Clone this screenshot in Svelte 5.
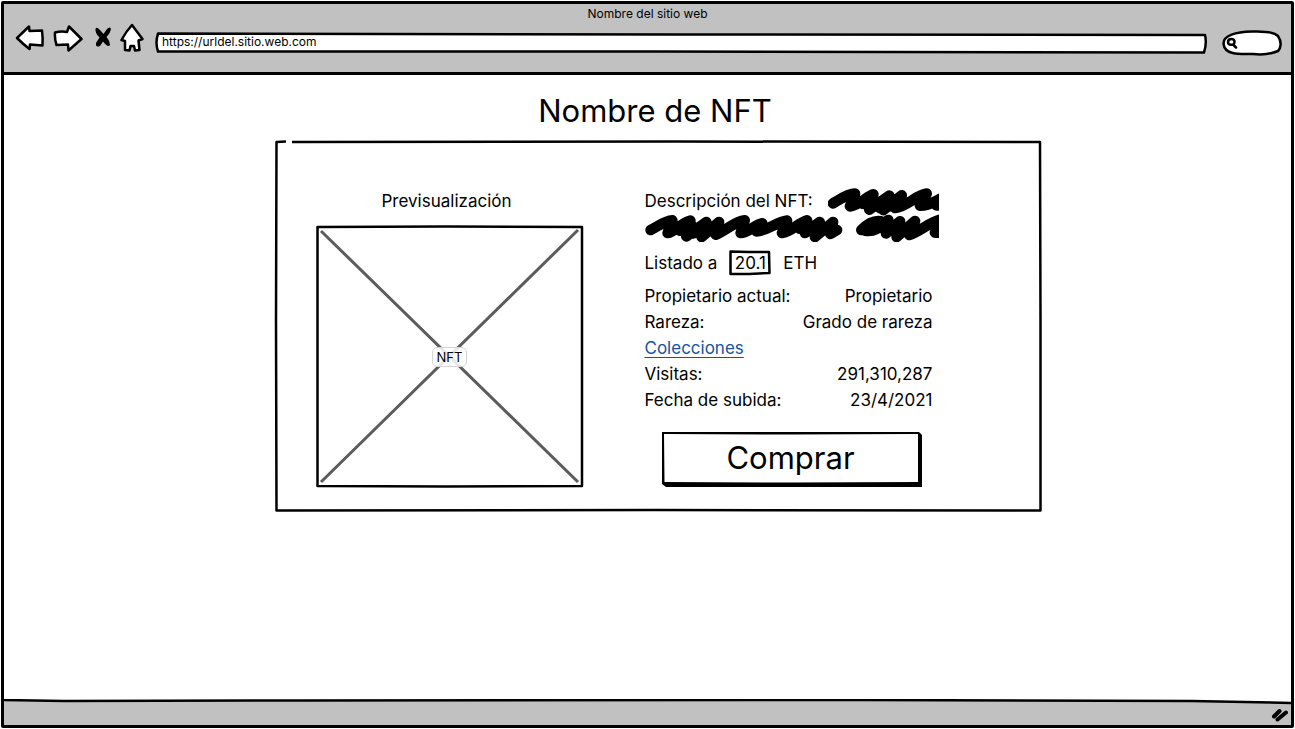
<script>
  const title = 'Nombre de NFT';
  let url = $state('https://urldel.sitio.web.com');
  let query = $state('');
  let price = $state('20.1');
</script>

<div class="browser">
  <header>
    <div class="site-name">Nombre del sitio web</div>
    <div class="toolbar">
      <button class="back" aria-label="Atrás">
        <svg width="30" height="28" viewBox="0 0 30 28"><path class="ink" d="M2 14 L14 2.5 L14.5 7 L27 6.5 Q28 14 27.5 21.5 L15 20.5 L14.5 25 Q8 20 2 14Z" /></svg>
      </button>
      <button class="forward" aria-label="Adelante">
        <svg width="30" height="28" viewBox="0 0 30 28"><path class="ink" d="M2 8.5 Q8 7 14 8 L16 2.5 L28.5 15 L15.5 26.5 L15 20.5 L3.5 21 Q1.5 15 2 8.5Z" /></svg>
      </button>
      <button class="stop" aria-label="Detener">
        <svg width="18" height="22" viewBox="0 0 18 22"><path d="M1.5 3 Q2 0 6 4 L9.5 8 L13 3 Q16 0 17 3 Q16.5 7 12.5 11 Q16 15 16 19 Q14 22 9 15.5 L6 20 Q1.5 22 2 17 L5.5 11.5 Q1 7.5 1.5 3Z" /></svg>
      </button>
      <button class="home" aria-label="Inicio">
        <svg width="24" height="30" viewBox="0 0 24 30"><path class="ink" d="M12 2 L22.5 16 L18.5 17.5 L19.5 27 L15 27.5 L14 23 L10.5 23 L9.5 27.5 L5 27 L5 18 L1.5 17 Q6 8.5 12 2Z" /></svg>
      </button>
      <div class="address sketch">
        <svg class="outline" viewBox="0 0 1051 22" preserveAspectRatio="none" aria-hidden="true"><path class="ink" d="M3 1.5 L520 2.5 L1049 3 Q1051 11 1048 20.5 L500 19.5 L3 19.5 Q0 11 3 1.5Z" /></svg>
        <input aria-label="Dirección" bind:value={url} />
      </div>
      <div class="search sketch">
        <svg class="outline" viewBox="0 0 60 26" preserveAspectRatio="none" aria-hidden="true"><path class="ink" d="M1.5 14 C1 5 14 2 30 1.5 C43 1 52 2 56 6 C60 12 59 18 56 21 C49 24 40 25 31 24 C20 24 3 26 1.5 14Z" /></svg>
        <svg class="lens" width="12" height="12" viewBox="0 0 12 12" aria-hidden="true"><path d="M2 5 C2 1 9 1 8.5 5 C8.5 9 2 8.5 2 5Z M7 7.5 L10 10.5" /></svg>
        <input aria-label="Buscar" bind:value={query} />
      </div>
    </div>
  </header>

  <main>
    <h1>{title}</h1>
    <section class="card sketch">
      <svg class="outline" viewBox="0 0 767 371" preserveAspectRatio="none" aria-hidden="true"><path class="line" d="M11 1.5 L1.5 2 L1 180 L1.5 369.5 L380 369 L765.5 369.5 L765.5 180 L765 2 L400 1.5 L17 2" /></svg>
      <figure>
        <figcaption>Previsualización</figcaption>
        <div class="preview sketch">
          <svg class="outline" viewBox="0 0 268 263" preserveAspectRatio="none" aria-hidden="true">
            <path class="cross" d="M5 6 L262 257 M262 5 L5 257" />
            <path class="line" d="M1.5 2 L130 1.5 L266 2 L266 261 L130 261.5 L1.5 261Z" />
          </svg>
          <span class="tag">NFT</span>
        </div>
      </figure>

      <div class="details">
        <p class="description">
          Descripción del NFT:
          <svg class="scribble" width="111" height="28" viewBox="24 22 333 84" aria-hidden="true"><path d="M39 68 C60 56 85 38 105 39 Q98 58 90 77 C115 75 140 48 160 41 L148 87 L208 45 L190 88 L245 44 L225 82 C260 78 290 42 320 39 L300 75 C325 76 345 62 362 54 L350 74 H362 M130 70 L160 66 L180 82 L215 76 L235 66" /></svg>
          <svg class="scribble" width="198" height="28" viewBox="16 18 594 84" aria-hidden="true"><path d="M33 66 C55 55 75 38 98 37 Q90 56 84 75 C105 72 125 45 152 38 L140 85 L200 42 L186 87 L238 42 L228 80 C255 70 285 40 315 37 L303 75 C325 75 345 50 368 46 L350 70 C385 68 410 42 442 38 L427 75 C455 72 475 45 502 37 L496 75 L540 42 L526 87 L580 42 L572 78 L592 66 M120 68 L160 56 L160 76 L200 64 L235 66 M480 62 L510 60 L520 72 L580 62" /></svg>
          <svg class="scribble" width="83" height="28" viewBox="108 102 249 84" aria-hidden="true"><path d="M124 150 C140 134 160 120 182 124 L136 152 C170 158 190 130 205 120 L198 160 L240 124 L230 171 L285 123 L268 165 C300 155 325 128 362 119 L345 158 H362 M150 144 L180 142 L220 150 L275 148" /></svg>
        </p>
        <div class="listing">
          <label for="price">Listado a</label>
          <span class="price sketch">
            <svg class="outline" viewBox="0 0 42 26" preserveAspectRatio="none" aria-hidden="true"><path class="line" d="M1.5 1.5 L20 2 L40 2 L40.5 23 L20 24 L1.5 24Z" /></svg>
            <input id="price" bind:value={price} />
          </span>
          <span>ETH</span>
        </div>
        <dl>
          <div><dt>Propietario actual:</dt><dd>Propietario</dd></div>
          <div><dt>Rareza:</dt><dd>Grado de rareza</dd></div>
          <div><dt><a href="#colecciones">Colecciones</a></dt></div>
          <div><dt>Visitas:</dt><dd>291,310,287</dd></div>
          <div><dt>Fecha de subida:</dt><dd>23/4/2021</dd></div>
        </dl>
        <button class="buy sketch">
          <svg class="outline" viewBox="0 0 260 55" preserveAspectRatio="none" aria-hidden="true">
            <path d="M0 0 H257 L260 3 V55 H4 L0 52Z" />
            <path class="face" d="M2 2 L130 2.5 L256 2 V50 L130 50.5 L2.5 50Z" />
          </svg>
          <span>Comprar</span>
        </button>
      </div>
    </section>
  </main>

  <footer>
    <svg class="edge" viewBox="0 0 1290 6" preserveAspectRatio="none" aria-hidden="true"><path class="above" d="M0 0 H1290 V4 L1190 2 L860 1 L300 1 L60 2 L0 1Z" /><path class="line" d="M0 1 L60 2 L300 1.5 L860 1 L1190 2 L1290 4" /></svg>
    <svg class="grip" width="18" height="14" viewBox="0 0 18 14" aria-hidden="true"><path d="M3 8.5 L8.5 3 M6.5 11.5 L15 4.5" /></svg>
  </footer>
</div>

<style>
  :global(body) {
    margin: 0;
    background: #fff;
  }
  * {
    box-sizing: border-box;
  }
  .browser {
    display: flex;
    flex-direction: column;
    min-height: 100vh;
    border: 1px solid #fff;
    position: relative;
    padding: 3px;
    color: #000;
    font: 17px/26px Inter, "Open Sans", sans-serif;
  }
  .browser::before {
    content: "";
    position: absolute;
    inset: 0;
    border: 3px solid #000;
    border-radius: 2px;
    pointer-events: none;
  }
  input,
  button {
    font: inherit;
    color: inherit;
    background: none;
    border: 0;
    padding: 0;
    margin: 0;
    min-width: 0;
  }
  button {
    cursor: pointer;
  }
  svg {
    display: block;
  }
  .ink,
  .line {
    fill: #fff;
    stroke: #000;
    stroke-width: 2.5px;
    stroke-linejoin: round;
    vector-effect: non-scaling-stroke;
  }
  .line {
    fill: none;
  }
  .sketch {
    position: relative;
  }
  .outline {
    position: absolute;
    inset: 0;
    width: 100%;
    height: 100%;
    overflow: visible;
    pointer-events: none;
  }
  header {
    background: #c1c1c1;
    border-bottom: 3px solid #000;
    padding-bottom: 17px;
  }
  .site-name {
    padding-top: 3px;
    text-align: center;
    font-size: 12px;
    line-height: 14px;
  }
  .toolbar {
    display: flex;
    align-items: center;
    height: 34px;
    padding: 0 9px 0 11px;
  }
  .back,
  .forward {
    margin-right: 8px;
  }
  .stop {
    margin: 0 8px 2px 3px;
  }
  .home {
    margin-right: 11px;
  }
  .address {
    flex: 1;
    height: 22px;
    margin: 9px 15px 0 0;
    padding: 0 7px;
  }
  .address input {
    position: relative;
    display: block;
    width: 100%;
    font-size: 12px;
    line-height: 20px;
  }
  .search {
    display: flex;
    align-items: center;
    width: 60px;
    height: 26px;
    margin-top: 9px;
    padding: 0 4px;
  }
  .lens {
    position: relative;
    flex: none;
  }
  .lens path {
    fill: none;
    stroke: #000;
    stroke-width: 2.5px;
    stroke-linecap: round;
  }
  .search input {
    position: relative;
    width: 34px;
    font-size: 12px;
    line-height: 16px;
  }
  main {
    flex: 1;
    padding: 16px 0 16px 21px;
  }
  h1 {
    margin: 0 6px 9px 0;
    text-align: center;
    font-size: 31px;
    line-height: 40px;
    font-weight: 400;
  }
  .card {
    display: flex;
    gap: 61px;
    max-width: 767px;
    margin: 0 auto;
    padding: 48px 41px 24px;
  }
  figure {
    flex: 0 1 268px;
    margin: 0;
  }
  figcaption {
    padding-right: 6px;
    text-align: center;
  }
  .preview {
    display: grid;
    place-items: center;
    aspect-ratio: 268 / 263;
    margin-top: 11px;
  }
  .cross {
    fill: none;
    stroke: #5c5c5c;
    stroke-width: 3px;
  }
  .tag {
    position: relative;
    padding: 0 4px;
    border: 1px solid #d4d4d4;
    border-radius: 5px;
    background: rgb(255 255 255 / 85%);
    font-size: 13px;
    line-height: 18px;
  }
  .details {
    flex: 0 1 294px;
  }
  .description {
    margin: 0;
    display: flex;
    flex-wrap: wrap;
    justify-content: space-between;
    align-items: center;
  }
  .scribble {
    margin-bottom: -2px;
  }
  .scribble path {
    fill: none;
    stroke: #000;
    stroke-width: 32px;
    stroke-linecap: round;
    stroke-linejoin: round;
  }
  .listing {
    display: flex;
    gap: 12px;
    margin: 10px 0 7px;
  }
  .price {
    width: 42px;
    height: 26px;
  }
  .price input {
    position: relative;
    display: block;
    width: 100%;
    height: 100%;
    text-align: center;
  }
  dl {
    margin: 0 6px 0 0;
  }
  dl div {
    display: flex;
    justify-content: space-between;
  }
  dd {
    margin: 0;
  }
  a {
    color: #12559b;
    text-underline-offset: 3px;
  }
  .buy {
    display: block;
    width: 260px;
    margin: 19px 0 0 17px;
    padding: 2px 4px 5px 2px;
    font-size: 31px;
    line-height: 48px;
  }
  .buy span {
    position: relative;
  }
  .face {
    fill: #fff;
  }
  footer {
    position: relative;
    display: flex;
    justify-content: flex-end;
    align-items: center;
    height: 24px;
    padding-right: 2px;
    background: #c1c1c1;
  }
  .edge {
    position: absolute;
    left: 0;
    top: -2px;
    width: 100%;
    height: 6px;
  }
  .above {
    fill: #fff;
  }
  .grip {
    margin-top: 4px;
  }
  .grip path {
    fill: none;
    stroke: #000;
    stroke-width: 4px;
    stroke-linecap: round;
  }
</style>
